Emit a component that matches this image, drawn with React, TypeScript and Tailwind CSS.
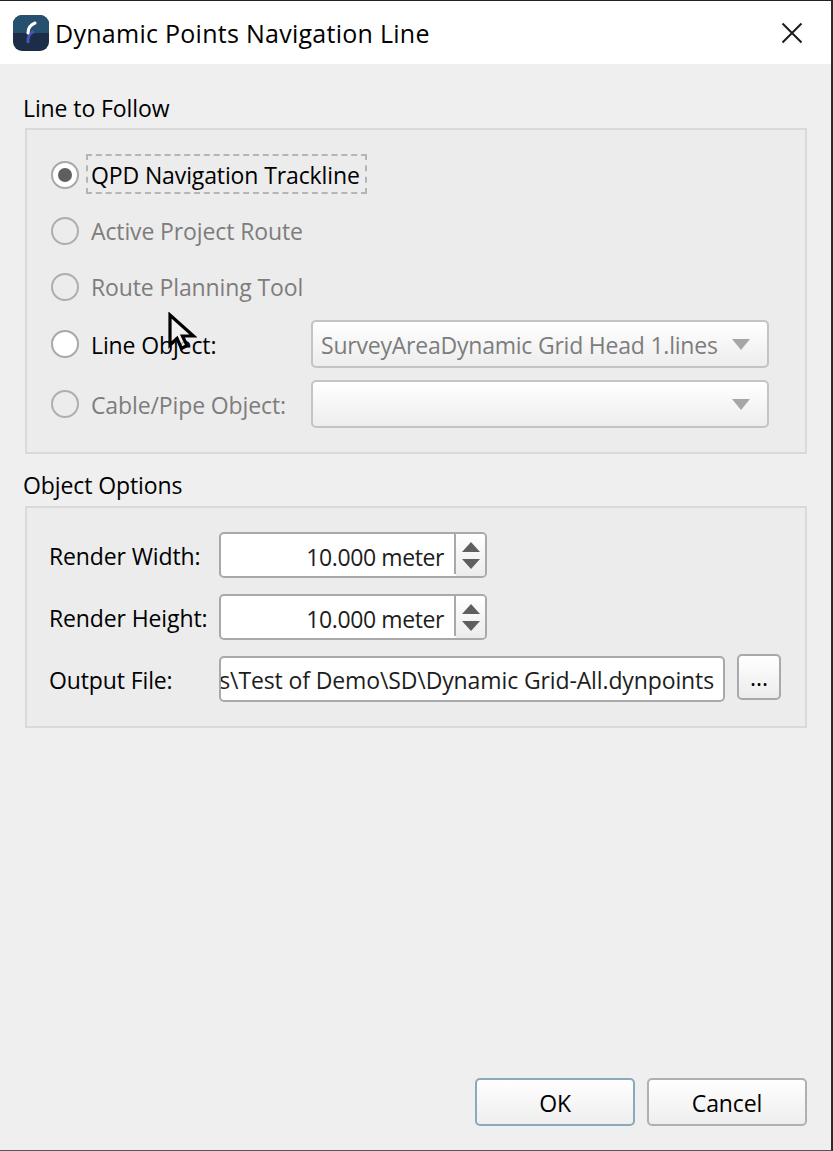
const sans = "font-['Open_Sans','Noto_Sans',sans-serif]";

function Radio({ checked, disabled }: { checked?: boolean; disabled?: boolean }) {
  return (
    <span
      className={`flex h-[28px] w-[28px] shrink-0 items-center justify-center rounded-full border-[2px] ${
        disabled ? "border-[#aeaeae] bg-[#ececec]" : "border-[#a8a8a8] bg-white"
      }`}
    >
      {checked && <span className="h-[14px] w-[14px] rounded-full bg-[#5f5f5f]" />}
    </span>
  );
}

function Combo({ text }: { text?: string }) {
  return (
    <div className="flex h-[48px] w-[458px] shrink-0 items-center justify-between rounded-[5px] border-[2px] border-[#c4c4c4] bg-gradient-to-b from-white to-[#ededed] pl-[8px] pr-[17px] text-[23px] tracking-[-0.22px] text-[#7d7d7d]">
      <span className="pt-[2px]">{text}</span>
      <svg width="18" height="11" viewBox="0 0 18 11" className="shrink-0">
        <path d="M0 0H18L9 11Z" fill="#a6a6a6" />
      </svg>
    </div>
  );
}

function Spin() {
  return (
    <div className="flex h-[46px] w-[268px] shrink-0 overflow-hidden rounded-[5px] border-[2px] border-[#a9a9a9] bg-white">
      <div className="flex flex-1 items-center justify-end pr-[10px] pt-[5px] text-[23px] tracking-[-0.4px] text-[#1d1d1d]">
        10.000 meter
      </div>
      <div className="mb-[2px] w-[2px] bg-[#a9a9a9]" />
      <div className="flex w-[29px] flex-col items-center justify-center gap-[7px] bg-gradient-to-b from-white to-[#ececec]">
        <svg width="18" height="10" viewBox="0 0 18 10">
          <path d="M0 10L9 0L18 10Z" fill="#5f5f5f" />
        </svg>
        <svg width="18" height="10" viewBox="0 0 18 10">
          <path d="M0 0H18L9 10Z" fill="#5f5f5f" />
        </svg>
      </div>
    </div>
  );
}

function Button({ label, focused }: { label: string; focused?: boolean }) {
  return (
    <button
      className={`flex h-[48px] w-[160px] items-center justify-center rounded-[5px] border-[2px] bg-gradient-to-b from-white to-[#eeeeee] pt-[2px] text-[23px] tracking-[-0.12px] text-black ${
        focused ? "border-[#8aa9bb]" : "border-[#b0b0b0]"
      }`}
    >
      {label}
    </button>
  );
}

export default function App() {
  return (
    <div className={`${sans} relative flex h-[1151px] w-[833px] flex-col overflow-hidden border-r-[2px] border-t-[1px] border-b-[1px] border-r-[#2b2b2b] border-t-[#222222] border-b-[#555555] bg-[#efefef] text-black`}>
      <header className="flex h-[63px] shrink-0 items-center bg-white pl-[13px] pr-[28px]">
        <svg width="36" height="36" viewBox="0 0 36 36" className="shrink-0">
          <rect width="36" height="36" rx="9" fill="#1b2d47" />
          <path d="M0 18V9A9 9 0 0 1 9 0H27A9 9 0 0 1 36 9V18Z" fill="#25506f" />
          <path d="M15 28C14.5 22 16 18 21 16.5" fill="none" stroke="#4a55b5" strokeWidth="3" />
          <path d="M15 18C15 13 17 10 22 8" fill="none" stroke="#ffffff" strokeWidth="3" strokeLinecap="round" />
        </svg>
        <h1 className="ml-[6px] flex-1 pt-[2px] text-[25px] font-normal tracking-[0.27px] text-black">Dynamic Points Navigation Line</h1>
        <svg width="22" height="22" viewBox="0 0 22 22" className="ml-[1px] shrink-0">
          <path d="M1.5 1.5L20.5 20.5M20.5 1.5L1.5 20.5" stroke="#1c1c1c" strokeWidth="2" />
        </svg>
      </header>

      <main className="flex flex-1 flex-col px-[23px]">
        <h2 className="mt-[27px] flex h-[34px] items-center text-[23px] font-normal leading-none tracking-[-0.1px]">Line to Follow</h2>
        <section className="ml-[2px] mr-[1px] mt-[3px] h-[326px] border-[2px] border-[#d9d9d9] bg-[#ececec] pl-[24px] pr-[36px] pt-[17px] text-[23px] tracking-[-0.12px]">
          <div className="flex h-[56px] items-center gap-[7px]">
            <Radio checked />
            <span className="mb-[2px] flex h-[40px] w-[281px] items-center border-[2px] border-dashed border-[#b5b5b5] pl-[3px] pt-[2px] text-black">QPD Navigation Trackline</span>
          </div>
          <div className="flex h-[56px] items-center gap-[12px] text-[#7d7d7d]">
            <Radio disabled />
            <span>Active Project Route</span>
          </div>
          <div className="flex h-[56px] items-center gap-[12px] text-[#7d7d7d]">
            <Radio disabled />
            <span>Route Planning Tool</span>
          </div>
          <div className="mt-[5px] flex h-[48px] items-center justify-between">
            <div className="flex items-center gap-[12px]">
              <Radio />
              <span className="pt-[2px]">Line Object:</span>
            </div>
            <Combo text="SurveyAreaDynamic Grid Head 1.lines" />
          </div>
          <div className="mt-[12px] flex h-[48px] items-center justify-between text-[#7d7d7d]">
            <div className="flex items-center gap-[12px]">
              <Radio disabled />
              <span className="pt-[2px]">Cable/Pipe Object:</span>
            </div>
            <Combo />
          </div>
        </section>

        <h2 className="mt-[14px] flex h-[34px] items-center text-[23px] font-normal leading-none tracking-[-0.1px]">Object Options</h2>
        <section className="ml-[2px] mr-[1px] mt-[4px] h-[222px] border-[2px] border-[#d9d9d9] bg-[#ececec] pl-[22px] pr-[24px] pt-[24px] text-[23px] tracking-[-0.12px]">
          <div className="flex h-[46px] items-center">
            <span className="w-[170px] shrink-0 pt-[3px]">Render Width:</span>
            <Spin />
          </div>
          <div className="mt-[16px] flex h-[46px] items-center">
            <span className="w-[170px] shrink-0 pt-[3px]">Render Height:</span>
            <Spin />
          </div>
          <div className="mt-[16px] flex h-[46px] items-center">
            <span className="w-[170px] shrink-0 pt-[3px]">Output File:</span>
            <div className="flex h-[46px] w-[506px] shrink-0 items-center justify-end overflow-hidden whitespace-nowrap rounded-[5px] border-[2px] border-[#a9a9a9] bg-white pr-[9px] pt-[3px] text-[#1d1d1d]">
              s\Test of Demo\SD\Dynamic Grid-All.dynpoints
            </div>
            <button className="mb-[4px] ml-[12px] flex h-[46px] w-[44px] shrink-0 items-center justify-center rounded-[5px] border-[2px] border-[#a9a9a9] bg-gradient-to-b from-white to-[#ececec] text-[23px] text-black">...</button>
          </div>
        </section>

        <footer className="mt-auto flex justify-end gap-[12px] pb-[24px] pr-[1px]">
          <Button label="OK" focused />
          <Button label="Cancel" />
        </footer>
      </main>

      <svg width="30" height="42" viewBox="0 0 30 42" className="absolute left-[167px] top-[311px]">
        <path d="M3 3V33L10 26.5L14.5 36.5L20 33.5L15.5 24H26.5Z" fill="#f2f2f2" fillOpacity="0.75" stroke="#000000" strokeWidth="3.2" />
      </svg>
    </div>
  );
}
